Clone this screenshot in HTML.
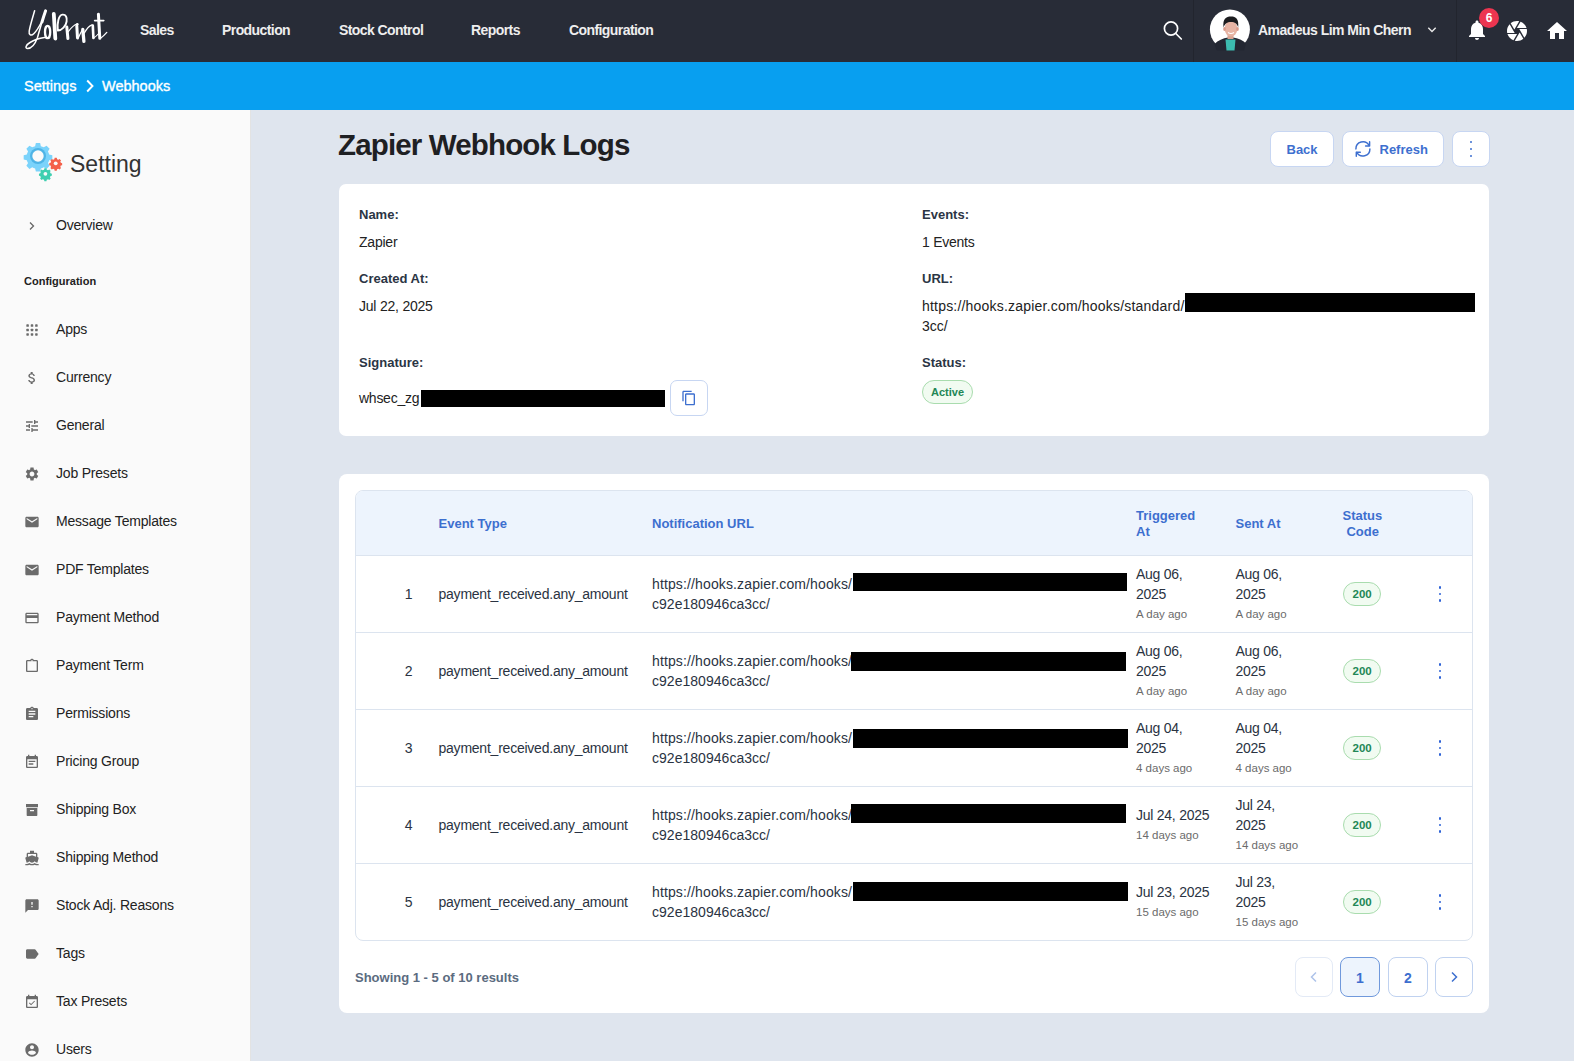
<!DOCTYPE html>
<html><head><meta charset="utf-8">
<style>
*{box-sizing:border-box;margin:0;padding:0}
html,body{width:1574px;height:1061px;overflow:hidden;background:#dfe5ee;font-family:"Liberation Sans",sans-serif;color:#212121}
.a{position:absolute}
.t{position:absolute;white-space:nowrap;line-height:20px;font-size:13.5px}
.b{font-weight:bold}
svg{display:block}
#nav{left:0;top:0;width:1574px;height:62px;background:#282c37}
#nav .n{color:#eeeeee;font-weight:bold;font-size:14px;letter-spacing:-0.58px;top:20px}
#crumb{left:0;top:62px;width:1574px;height:48px;background:#089ff0}
#side{left:0;top:110px;width:251px;height:951px;background:#fafafa;border-right:1px solid #e3e3e3}
.si{position:absolute;left:24px;width:16px;height:16px;fill:#6b6b6b}
.st{position:absolute;left:56px;font-size:14px;letter-spacing:-0.2px;margin-top:-1px;line-height:20px;color:#222;white-space:nowrap}
</style></head><body>
<!-- NAV -->
<div id="nav" class="a">
  <svg class="a" style="left:20px;top:5px" width="95" height="50" viewBox="0 0 95 50" fill="none" stroke="#fff" stroke-linecap="round" stroke-linejoin="round">
    <path d="M14.6 5.8 C12.5 13 10 21 9.2 26 C8.6 30 11 31.5 14 28.5 C17 25.5 19.5 21 21.5 17" stroke-width="1.5"/>
    <path d="M25.6 5.8 C24.5 9 23.5 12 22 17" stroke-width="3"/>
    <path d="M22 17 C20.5 22 19 27 17.5 32.5 C15.5 38 12 43.5 7.5 43.5 C5 43.5 5.5 40 10 37.5 C14 35 19 33.2 24.5 32.5" stroke-width="1.5"/>
    <ellipse cx="27.6" cy="27" rx="2.6" ry="6.2" stroke-width="2.3"/>
    <path d="M33.8 9 L35.3 33.5" stroke-width="3.8"/>
    <path d="M37.8 25.5 C37 18 38.5 10 42.5 9.6 C46 9.3 47.2 12.5 46.6 16.5 C46 21 42 25.3 37.8 25.5" stroke-width="1.9"/>
    <path d="M46.8 22 L47.9 33.5" stroke-width="3"/>
    <path d="M48.3 26.6 C51 23 54 19.8 57.2 18.8" stroke-width="1.2"/>
    <circle cx="57.4" cy="19.2" r="1.2" fill="#fff" stroke="none"/>
    <path d="M56.8 20.8 L57.5 33" stroke-width="3"/>
    <path d="M58.5 32.5 C60 29 61.5 26 62.8 24.3" stroke-width="1.2"/>
    <path d="M62.8 24.5 L63.9 36.3" stroke-width="3.3"/>
    <path d="M64.3 28 C66.5 24 69 20.8 72 19.8" stroke-width="1.3"/>
    <path d="M72.8 20.6 L73.4 33" stroke-width="2.6"/>
    <path d="M73.6 33 C75.5 32 77.5 30 79.5 27.5" stroke-width="1.1"/>
    <path d="M78.4 9.2 L79.8 33.3" stroke-width="3"/>
    <path d="M74.6 15.6 L83.8 15.6" stroke-width="1.6"/>
    <path d="M80.5 33.3 C82.5 32 84.5 30 86.8 27.4" stroke-width="1.3"/>
  </svg>
  <div class="t n" style="left:140px">Sales</div>
  <div class="t n" style="left:222px">Production</div>
  <div class="t n" style="left:339px">Stock Control</div>
  <div class="t n" style="left:471px">Reports</div>
  <div class="t n" style="left:569px">Configuration</div>

  <svg class="a" style="left:1160px;top:18px" width="26" height="26" viewBox="0 0 26 26" fill="none" stroke="#fff" stroke-width="1.7" stroke-linecap="round">
    <circle cx="11" cy="10.5" r="6.6"/><path d="M15.8 15.5 L21.3 21"/>
  </svg>
  <div class="a" style="left:1193px;top:0;width:1px;height:62px;background:#22252e"></div>
  <svg class="a" style="left:1208px;top:8px" width="44" height="46" viewBox="0 0 44 46">
    <circle cx="21.9" cy="21.5" r="20" fill="#fff"/>
    <path d="M6.5 36 C10 32.5 15 30 20 29.5 L25 29.5 C30 30 35 32.5 38 35.5 C37 39 36.5 41 36 42.5 L9 42.5 C8 41 7.5 39 6.5 36Z" fill="#232732"/>
    <path d="M17.5 31.5 L27.5 31.5 L26.5 42.5 L18.5 42.5Z" fill="#3cbcb0"/>
    <rect x="19.5" y="26" width="6" height="5" fill="#d9a493"/>
    <ellipse cx="23" cy="20.5" rx="6.3" ry="8" fill="#e7b4a4"/>
    <ellipse cx="16.5" cy="21" rx="1.3" ry="2" fill="#d99a8a"/>
    <ellipse cx="29.5" cy="21" rx="1.3" ry="2" fill="#d99a8a"/>
    <path d="M15.5 19.5 C14.5 11 18 8.6 23 8.6 C28 8.6 31 11 30.2 19.5 C29 15.5 27 14 23 14 C19 14 17 15.5 15.5 19.5Z" fill="#1d1d20"/>
    <path d="M20 24.5 Q23 26.5 26 24.5" stroke="#fff" stroke-width="1.1" fill="none"/>
  </svg>
  <div class="t" style="left:1258px;top:20px;color:#eeeeee;font-weight:bold;font-size:14px;letter-spacing:-0.53px">Amadeus Lim Min Chern</div>
  <svg class="a" style="left:1426px;top:24px" width="12" height="12" viewBox="0 0 12 12" fill="none" stroke="#e8e8e8" stroke-width="1.4"><path d="M2.3 3.8 L6 7.6 L9.7 3.8"/></svg>
  <div class="a" style="left:1456px;top:0;width:1px;height:62px;background:#22252e"></div>
  <svg class="a" style="left:1465px;top:18px" width="24" height="24" viewBox="0 0 24 24" fill="#fff"><path d="M12 22c1.1 0 2-.9 2-2h-4c0 1.1.89 2 2 2zm6-6v-5c0-3.07-1.64-5.64-4.5-6.32V4c0-.83-.67-1.5-1.5-1.5s-1.5.67-1.5 1.5v.68C7.63 5.36 6 7.92 6 11v5l-2 2v1h16v-1l-2-2z"/></svg>
  <div class="a" style="left:1479px;top:8px;width:20px;height:20px;border-radius:50%;background:#ec3550;color:#fff;font-weight:bold;font-size:12px;line-height:20px;text-align:center">6</div>
  <svg class="a" style="left:1505px;top:19px" width="24" height="24" viewBox="0 0 24 24" fill="#fff"><path d="M9.4 10.5l4.77-8.26C13.47 2.09 12.75 2 12 2c-2.4 0-4.6.85-6.32 2.25l3.66 6.35.06-.1zM21.54 9c-.92-2.92-3.150-5.26-6-6.34L11.88 9h9.66zm.26 1h-7.49l.29.5 4.76 8.25C21 16.97 22 14.61 22 12c0-.69-.07-1.35-.2-2zM8.54 12l-3.9-6.75C3.01 7.03 2 9.39 2 12c0 .69.07 1.350.2 2h7.49l-1.15-2zm-6.08 3c.92 2.92 3.15 5.26 6 6.34L12.12 15H2.46zm11.27 0l-3.9 6.76c.7.15 1.42.24 2.17.24 2.4 0 4.6-.85 6.32-2.25l-3.66-6.35-.93 1.6z"/></svg>
  <svg class="a" style="left:1545px;top:18px" width="24" height="24" viewBox="0 0 24 24" fill="#fff"><path d="M10 21v-6h4v6h5v-8h3L12 4 2 13h3v8z"/></svg>
</div>

<!-- BREADCRUMB -->
<div id="crumb" class="a">
  <div class="t" style="left:24px;top:14px;color:#fff;font-size:14.5px;-webkit-text-stroke:0.35px #fff">Settings</div>
  <svg class="a" style="left:83px;top:16px" width="14" height="16" viewBox="0 0 14 16" fill="none" stroke="#fff" stroke-width="1.9"><path d="M4.2 2.5 L9.5 8 L4.2 13.5"/></svg>
  <div class="t" style="left:102px;top:14px;color:#fff;font-size:14.5px;-webkit-text-stroke:0.35px #fff">Webhooks</div>
</div>

<!-- SIDEBAR -->
<div id="side" class="a">
  <svg class="a" style="left:22px;top:30px" width="44" height="42" viewBox="0 0 44 42">
    <g transform="translate(16 16) scale(0.93)"><path fill="#7bd3fb" d="M-2.3 -14 h4.6 l0.8 3.4 a11 11 0 0 1 3.1 1.3 l3 -1.8 l3.3 3.3 l-1.8 3 a11 11 0 0 1 1.3 3.1 l3.4 0.8 v4.6 l-3.4 0.8 a11 11 0 0 1 -1.3 3.1 l1.8 3 l-3.3 3.3 l-3 -1.8 a11 11 0 0 1 -3.1 1.3 l-0.8 3.4 h-4.6 l-0.8 -3.4 a11 11 0 0 1 -3.1 -1.3 l-3 1.8 l-3.3 -3.3 l1.8 -3 a11 11 0 0 1 -1.3 -3.1 l-3.4 -0.8 v-4.6 l3.4 -0.8 a11 11 0 0 1 1.3 -3.1 l-1.8 -3 l3.3 -3.3 l3 1.8 a11 11 0 0 1 3.1 -1.3z"/>
    <circle r="8.6" fill="#4fb4e6"/><circle r="6.1" fill="#fafafa"/></g>
    <g transform="translate(33.7 23.3) scale(0.86)"><path fill="#f4604a" d="M-1.2 -6.4 h2.4 l0.4 1.6 a5 5 0 0 1 1.5 .6 l1.4 -.9 l1.7 1.7 l-.9 1.4 a5 5 0 0 1 .6 1.5 l1.6 .4 v2.4 l-1.6 .4 a5 5 0 0 1 -.6 1.5 l.9 1.4 l-1.7 1.7 l-1.4 -.9 a5 5 0 0 1 -1.5 .6 l-.4 1.6 h-2.4 l-.4 -1.6 a5 5 0 0 1 -1.5 -.6 l-1.4 .9 l-1.7 -1.7 l.9 -1.4 a5 5 0 0 1 -.6 -1.5 l-1.6 -.4 v-2.4 l1.6 -.4 a5 5 0 0 1 .6 -1.5 l-.9 -1.4 l1.7 -1.7 l1.4 .9 a5 5 0 0 1 1.5 -.6z"/><circle r="2.2" fill="#fafafa"/></g>
    <g transform="translate(23.4 33.8) scale(0.86)"><path fill="#3fcfb0" d="M-1.2 -6.4 h2.4 l0.4 1.6 a5 5 0 0 1 1.5 .6 l1.4 -.9 l1.7 1.7 l-.9 1.4 a5 5 0 0 1 .6 1.5 l1.6 .4 v2.4 l-1.6 .4 a5 5 0 0 1 -.6 1.5 l.9 1.4 l-1.7 1.7 l-1.4 -.9 a5 5 0 0 1 -1.5 .6 l-.4 1.6 h-2.4 l-.4 -1.6 a5 5 0 0 1 -1.5 -.6 l-1.4 .9 l-1.7 -1.7 l.9 -1.4 a5 5 0 0 1 -.6 -1.5 l-1.6 -.4 v-2.4 l1.6 -.4 a5 5 0 0 1 .6 -1.5 l-.9 -1.4 l1.7 -1.7 l1.4 .9 a5 5 0 0 1 1.5 -.6z"/><circle r="2.2" fill="#fafafa"/></g>
  </svg>
  <div class="t" style="left:70px;top:39px;font-size:23px;line-height:30px;color:#333">Setting</div>
  <svg class="a" style="left:26px;top:109px" width="12" height="14" viewBox="0 0 12 14" fill="none" stroke="#666" stroke-width="1.3"><path d="M4 3.5 L7.5 7 L4 10.5"/></svg>
  <div class="st" style="top:106px">Overview</div>
  <div class="t b" style="left:24px;top:163px;font-size:11px;line-height:16px;color:#222">Configuration</div>
  <svg class="si" style="top:212px" viewBox="0 0 24 24"><rect x="3.5" y="3.5" width="3.8" height="3.8" rx="0.9"/><rect x="10.1" y="3.5" width="3.8" height="3.8" rx="0.9"/><rect x="16.7" y="3.5" width="3.8" height="3.8" rx="0.9"/><rect x="3.5" y="10.1" width="3.8" height="3.8" rx="0.9"/><rect x="10.1" y="10.1" width="3.8" height="3.8" rx="0.9"/><rect x="16.7" y="10.1" width="3.8" height="3.8" rx="0.9"/><rect x="3.5" y="16.7" width="3.8" height="3.8" rx="0.9"/><rect x="10.1" y="16.7" width="3.8" height="3.8" rx="0.9"/><rect x="16.7" y="16.7" width="3.8" height="3.8" rx="0.9"/></svg>
  <div class="st" style="top:210px">Apps</div>
  <svg class="si" style="top:260px" viewBox="0 0 24 24"><path d="M11.8 10.9c-2.27-.59-3-1.2-3-2.15 0-1.09 1.01-1.85 2.7-1.85 1.78 0 2.440.85 2.5 2.1h2.21c-.07-1.72-1.12-3.3-3.21-3.81V3h-3v2.16c-1.94.42-3.5 1.68-3.5 3.61 0 2.31 1.910 3.46 4.7 4.13 2.5.6 3 1.48 3 2.41 0 .69-.49 1.79-2.7 1.79-2.06 0-2.87-.92-2.98-2.1h-2.2c.12 2.19 1.76 3.42 3.68 3.83V21h3v-2.15c1.95-.37 3.5-1.5 3.5-3.55 0-2.84-2.43-3.81-4.7-4.4z" transform="translate(12 12) scale(1) translate(-12 -12)"/></svg>
  <div class="st" style="top:258px">Currency</div>
  <svg class="si" style="top:308px" viewBox="0 0 24 24"><path d="M3 17v2h6v-2H3zM3 5v2h10V5H3zm10 16v-2h8v-2h-8v-2h-2v6h2zM7 9v2H3v2h4v2h2V9H7zm14 4v-2H11v2h10zm-6-4h2V7h4V5h-4V3h-2v6z" /></svg>
  <div class="st" style="top:306px">General</div>
  <svg class="si" style="top:356px" viewBox="0 0 24 24"><path d="M19.14 12.94c.04-.3.06-.61.06-.94 0-.32-.02-.64-.07-.94l2.03-1.58c.18-.14.23-.41.12-.61l-1.92-3.32c-.12-.22-.37-.29-.59-.22l-2.39.96c-.5-.38-1.03-.7-1.62-.94l-.36-2.54c-.04-.24-.24-.41-.48-.41h-3.84c-.24 0-.43.17-.47.41l-.36 2.54c-.59.24-1.13.57-1.62.94l-2.39-.96c-.22-.08-.47 0-.59.22L2.74 8.87c-.12.21-.08.47.12.61l2.030 1.58c-.05.3-.09.63-.09.94s.02.64.07.94l-2.03 1.58c-.18.14-.23.41-.12.61l1.92 3.32c.12.22.37.29.59.22l2.39-.96c.5.38 1.03.7 1.62.94l.36 2.54c.05.24.24.41.48.41h3.84c.24 0 .44-.17.47-.41l.36-2.54c.59-.24 1.13-.56 1.62-.94l2.39.96c.22.08.47 0 .59-.22l1.92-3.32c.12-.22.07-.47-.12-.61l-2.01-1.58zM12 15.6c-1.98 0-3.6-1.62-3.6-3.6s1.62-3.6 3.6-3.6 3.6 1.62 3.6 3.6-1.62 3.6-3.6 3.6z"/></svg>
  <div class="st" style="top:354px">Job Presets</div>
  <svg class="si" style="top:404px" viewBox="0 0 24 24"><path d="M20 4H4c-1.1 0-1.99.9-1.99 2L2 18c0 1.1.9 2 2 2h16c1.1 0 2-.9 2-2V6c0-1.1-.9-2-2-2zm0 4l-8 5-8-5V6l8 5 8-5v2z"/></svg>
  <div class="st" style="top:402px">Message Templates</div>
  <svg class="si" style="top:452px" viewBox="0 0 24 24"><path d="M20 4H4c-1.1 0-1.99.9-1.99 2L2 18c0 1.1.9 2 2 2h16c1.1 0 2-.9 2-2V6c0-1.1-.9-2-2-2zm0 4l-8 5-8-5V6l8 5 8-5v2z"/></svg>
  <div class="st" style="top:450px">PDF Templates</div>
  <svg class="si" style="top:500px" viewBox="0 0 24 24"><path d="M20 4H4c-1.11 0-1.99.89-1.99 2L2 18c0 1.11.89 2 2 2h16c1.11 0 2-.89 2-2V6c0-1.11-.89-2-2-2zm0 14H4v-6h16v6zm0-10H4V6h16v2z"/></svg>
  <div class="st" style="top:498px">Payment Method</div>
  <svg class="si" style="top:548px" viewBox="0 0 24 24"><path d="M19 3h-4.18C14.4 1.84 13.3 1 12 1c-1.3 0-2.4.84-2.82 2H5c-1.1 0-2 .9-2 2v14c0 1.1.9 2 2 2h14c1.1 0 2-.9 2-2V5c0-1.1-.9-2-2-2zm-7 0c.55 0 1 .45 1 1s-.45 1-1 1-1-.45-1-1 .45-1 1-1zm7 16H5V5h14v14z"/></svg>
  <div class="st" style="top:546px">Payment Term</div>
  <svg class="si" style="top:596px" viewBox="0 0 24 24"><path d="M19 3h-4.18C14.4 1.84 13.3 1 12 1c-1.3 0-2.4.84-2.82 2H5c-1.1 0-2 .9-2 2v14c0 1.1.9 2 2 2h14c1.1 0 2-.9 2-2V5c0-1.1-.9-2-2-2zm-7 0c.55 0 1 .45 1 1s-.45 1-1 1-1-.45-1-1 .45-1 1-1zm2 14H7v-2h7v2zm3-4H7v-2h10v2zm0-4H7V7h10v2z"/></svg>
  <div class="st" style="top:594px">Permissions</div>
  <svg class="si" style="top:644px" viewBox="0 0 24 24"><path d="M17 10H7v2h10v-2zm2-7h-1V1h-2v2H8V1H6v2H5c-1.11 0-1.99.9-1.99 2L3 19c0 1.1.89 2 2 2h14c1.1 0 2-.9 2-2V5c0-1.1-.9-2-2-2zm0 16H5V8h14v11zm-5-5H7v2h7v-2z"/></svg>
  <div class="st" style="top:642px">Pricing Group</div>
  <svg class="si" style="top:692px" viewBox="0 0 24 24"><path d="M3 3h18v5H3zM4 9h16v11a1 1 0 0 1-1 1H5a1 1 0 0 1-1-1zM9 12v2h6v-2z" fill-rule="evenodd"/></svg>
  <div class="st" style="top:690px">Shipping Box</div>
  <svg class="si" style="top:740px" viewBox="0 0 24 24"><path d="M20 21c-1.39 0-2.78-.47-4-1.32-2.44 1.71-5.56 1.71-8 0C6.78 20.53 5.39 21 4 21H2v2h2c1.38 0 2.74-.35 4-.99 2.52 1.29 5.48 1.29 8 0 1.26.65 2.62.99 4 .99h2v-2h-2zM3.95 19H4c1.6 0 3.02-.88 4-2 .98 1.12 2.4 2 4 2s3.02-.88 4-2c.98 1.12 2.4 2 4 2h.05l1.89-6.68c.08-.26.06-.54-.06-.78s-.34-.42-.6-.5L20 10.62V6c0-1.1-.9-2-2-2h-3V1H9v3H6c-1.1 0-2 .9-2 2v4.62l-1.29.42c-.26.08-.48.26-.6.5s-.15.52-.06.78L3.95 19zM6 6h12v3.970L12 8 6 9.97V6z"/></svg>
  <div class="st" style="top:738px">Shipping Method</div>
  <svg class="si" style="top:788px" viewBox="0 0 24 24"><path d="M20 2H4c-1.1 0-1.99.9-1.99 2L2 22l4-4h14c1.1 0 2-.9 2-2V4c0-1.1-.9-2-2-2zm-7 12h-2v-2h2v2zm0-4h-2V6h2v4z"/></svg>
  <div class="st" style="top:786px">Stock Adj. Reasons</div>
  <svg class="si" style="top:836px" viewBox="0 0 24 24"><path d="M17.63 5.84C17.27 5.33 16.67 5 16 5L5 5.01C3.9 5.01 3 5.9 3 7v10c0 1.1.9 1.99 2 1.99L16 19c.67 0 1.27-.33 1.63-.84L22 12l-4.37-6.16z"/></svg>
  <div class="st" style="top:834px">Tags</div>
  <svg class="si" style="top:884px" viewBox="0 0 24 24"><path d="M16.53 11.06L15.47 10l-4.88 4.88-2.12-2.12-1.06 1.06L10.59 17l5.94-5.94zM19 3h-1V1h-2v2H8V1H6v2H5c-1.11 0-1.99.9-1.99 2L3 19c0 1.1.89 2 2 2h14c1.1 0 2-.9 2-2V5c0-1.1-.9-2-2-2zm0 16H5V8h14v11z"/></svg>
  <div class="st" style="top:882px">Tax Presets</div>
  <svg class="si" style="top:932px" viewBox="0 0 24 24"><path d="M12 2C6.48 2 2 6.48 2 12s4.48 10 10 10 10-4.48 10-10S17.52 2 12 2zm0 3c1.66 0 3 1.34 3 3s-1.34 3-3 3-3-1.34-3-3 1.34-3 3-3zm0 14.2c-2.5 0-4.710-1.28-6-3.22.03-1.99 4-3.08 6-3.08 1.99 0 5.97 1.09 6 3.08-1.29 1.94-3.5 3.22-6 3.22z"/></svg>
  <div class="st" style="top:930px">Users</div>
</div>

<!-- MAIN -->
<div id="main">
<div class="t" style="left:338px;top:128px;font-size:29.5px;line-height:34px;font-weight:bold;color:#1e2023;letter-spacing:-0.85px">Zapier Webhook Logs</div>
<div style="position:absolute;background:#fff;border:1px solid #c7d6f2;border-radius:8px;left:1270px;top:131px;width:64px;height:36px"></div>
<div class="t" style="left:1286.5px;top:140px;font-size:13px;line-height:20px;font-weight:bold;color:#3d6fcf">Back</div>
<div style="position:absolute;background:#fff;border:1px solid #c7d6f2;border-radius:8px;left:1342px;top:131px;width:102px;height:36px"></div>
<svg class="a" style="left:1352px;top:138px" width="22" height="22" viewBox="0 0 22 22" fill="none" stroke="#3d6fcf" stroke-width="1.45" stroke-linecap="round" stroke-linejoin="round"><path d="M3.9 10.9 A7 7 0 0 1 17 7.4"/><path d="M17.6 3.8 L17.6 7.9 L13.6 7.9"/><path d="M17.9 10.9 A7 7 0 0 1 4.8 14.4"/><path d="M4.3 18.2 L4.3 14.2 L8.3 14.2"/></svg>
<div class="t" style="left:1379.5px;top:140px;font-size:13px;line-height:20px;font-weight:bold;color:#3d6fcf">Refresh</div>
<div style="position:absolute;background:#fff;border:1px solid #c7d6f2;border-radius:8px;left:1452px;top:131px;width:38px;height:36px"></div>
<div class="a" style="left:1469.6px;top:140.9px;width:2.6px;height:2.6px;border-radius:50%;background:#3d6fcf"></div>
<div class="a" style="left:1469.6px;top:147.7px;width:2.6px;height:2.6px;border-radius:50%;background:#3d6fcf"></div>
<div class="a" style="left:1469.6px;top:154.5px;width:2.6px;height:2.6px;border-radius:50%;background:#3d6fcf"></div>
<div class="a" style="left:339px;top:184px;width:1150px;height:252px;background:#fff;border-radius:7px"></div>
<div class="t" style="left:359px;top:205px;font-size:13px;line-height:20px;font-weight:bold;color:#2b3544">Name:</div>
<div class="t" style="left:359px;top:232px;font-size:14px;line-height:20px;color:#222;letter-spacing:-0.22px">Zapier</div>
<div class="t" style="left:359px;top:269px;font-size:13px;line-height:20px;font-weight:bold;color:#2b3544">Created At:</div>
<div class="t" style="left:359px;top:296px;font-size:14px;line-height:20px;color:#222;letter-spacing:-0.22px">Jul 22, 2025</div>
<div class="t" style="left:359px;top:353px;font-size:13px;line-height:20px;font-weight:bold;color:#2b3544">Signature:</div>
<div class="t" style="left:359px;top:388px;font-size:14px;line-height:20px;color:#222;letter-spacing:-0.26px">whsec_zg</div>
<div class="a" style="left:421px;top:390px;width:244px;height:17px;background:#000"></div>
<div class="a" style="left:670px;top:380px;width:38px;height:36px;border:1px solid #c7d6f2;border-radius:7px;background:#fff"></div>
<svg class="a" style="left:681px;top:390px" width="16" height="16" viewBox="0 0 24 24" fill="#3d6fcf"><path d="M16 1H4c-1.1 0-2 .9-2 2v14h2V3h12V1zm3 4H8c-1.1 0-2 .9-2 2v14c0 1.1.9 2 2 2h11c1.1 0 2-.9 2-2V7c0-1.1-.9-2-2-2zm0 16H8V7h11v14z"/></svg>
<div class="t" style="left:922px;top:205px;font-size:13px;line-height:20px;font-weight:bold;color:#2b3544">Events:</div>
<div class="t" style="left:922px;top:232px;font-size:14px;line-height:20px;color:#222;letter-spacing:-0.25px">1 Events</div>
<div class="t" style="left:922px;top:269px;font-size:13px;line-height:20px;font-weight:bold;color:#2b3544">URL:</div>
<div class="t" style="left:922px;top:296px;font-size:14px;line-height:20px;color:#222;letter-spacing:0.2px">https://hooks.zapier.com/hooks/standard/</div>
<div class="a" style="left:1185px;top:293px;width:290px;height:19px;background:#000"></div>
<div class="t" style="left:922px;top:316px;font-size:14px;line-height:20px;color:#222">3cc/</div>
<div class="t" style="left:922px;top:353px;font-size:13px;line-height:20px;font-weight:bold;color:#2b3544">Status:</div>
<div class="a" style="left:922px;top:380px;width:51px;height:24px;border:1px solid #a9dcae;border-radius:12px;background:#f1fbf1"></div>
<div class="t" style="left:931px;top:384px;font-size:11px;line-height:16px;font-weight:bold;color:#228756">Active</div>
<div class="a" style="left:339px;top:474px;width:1150px;height:539px;background:#fff;border-radius:8px"></div>
<div class="a" style="left:355px;top:490px;width:1118px;height:451px;border:1px solid #dce4ef;border-radius:8px;overflow:hidden"><div class="a" style="left:0;top:0;width:1116px;height:65px;background:#edf4fd;border-bottom:1px solid #dce4ef"></div>
<div class="a" style="left:0;top:141px;width:1116px;height:1px;background:#dce4ef"></div>
<div class="a" style="left:0;top:218px;width:1116px;height:1px;background:#dce4ef"></div>
<div class="a" style="left:0;top:295px;width:1116px;height:1px;background:#dce4ef"></div>
<div class="a" style="left:0;top:372px;width:1116px;height:1px;background:#dce4ef"></div>
</div>
<div class="t" style="left:438.5px;top:514px;font-size:13px;line-height:20px;font-weight:bold;color:#3d6fcf">Event Type</div>
<div class="t" style="left:652px;top:514px;font-size:13px;line-height:20px;font-weight:bold;color:#3d6fcf">Notification URL</div>
<div class="t" style="left:1136px;top:508px;font-size:13px;line-height:16px;font-weight:bold;color:#3d6fcf">Triggered</div>
<div class="t" style="left:1136px;top:524px;font-size:13px;line-height:16px;font-weight:bold;color:#3d6fcf">At</div>
<div class="t" style="left:1235.5px;top:514px;font-size:13px;line-height:20px;font-weight:bold;color:#3d6fcf">Sent At</div>
<div class="t" style="left:1342.5px;top:508px;font-size:13px;line-height:16px;font-weight:bold;color:#3d6fcf">Status</div>
<div class="t" style="left:1346.4px;top:524px;font-size:13px;line-height:16px;font-weight:bold;color:#3d6fcf">Code</div>
<div class="t" style="left:380px;width:32.5px;text-align:right;top:584px;color:#2a3342;font-size:14px">1</div>
<div class="t" style="left:438.5px;top:584px;font-size:14px;line-height:20px;color:#2a3342;letter-spacing:-0.23px">payment_received.any_amount</div>
<div class="t" style="left:652px;top:574px;font-size:14px;line-height:20px;color:#2a3342;letter-spacing:0.13px">https://hooks.zapier.com/hooks/</div>
<div class="t" style="left:652px;top:594px;font-size:14px;line-height:20px;color:#2a3342;letter-spacing:0.03px">c92e180946ca3cc/</div>
<div class="a" style="left:853px;top:573px;width:274px;height:18px;background:#000"></div>
<div class="t" style="left:1136px;top:564px;font-size:14px;line-height:20px;color:#2a3342;letter-spacing:-0.25px">Aug 06,</div>
<div class="t" style="left:1136px;top:584px;font-size:14px;line-height:20px;color:#2a3342;letter-spacing:-0.25px">2025</div>
<div class="t" style="left:1136px;top:605px;font-size:11.5px;line-height:18px;color:#6b6b6b">A day ago</div>
<div class="t" style="left:1235.5px;top:564px;font-size:14px;line-height:20px;color:#2a3342;letter-spacing:-0.25px">Aug 06,</div>
<div class="t" style="left:1235.5px;top:584px;font-size:14px;line-height:20px;color:#2a3342;letter-spacing:-0.25px">2025</div>
<div class="t" style="left:1235.5px;top:605px;font-size:11.5px;line-height:18px;color:#6b6b6b">A day ago</div>
<div class="a" style="left:1343px;top:582px;width:38px;height:24px;border:1px solid #a9dcae;border-radius:12px;background:#f1fbf1"></div>
<div class="t" style="left:1352.5px;top:586px;font-size:11.5px;line-height:16px;font-weight:bold;color:#228756">200</div>
<div class="a" style="left:1438.6px;top:586.0px;width:2.6px;height:2.6px;border-radius:50%;background:#2f63d6"></div>
<div class="a" style="left:1438.6px;top:592.6px;width:2.6px;height:2.6px;border-radius:50%;background:#2f63d6"></div>
<div class="a" style="left:1438.6px;top:599.2px;width:2.6px;height:2.6px;border-radius:50%;background:#2f63d6"></div>
<div class="t" style="left:380px;width:32.5px;text-align:right;top:661px;color:#2a3342;font-size:14px">2</div>
<div class="t" style="left:438.5px;top:661px;font-size:14px;line-height:20px;color:#2a3342;letter-spacing:-0.23px">payment_received.any_amount</div>
<div class="t" style="left:652px;top:651px;font-size:14px;line-height:20px;color:#2a3342;letter-spacing:0.13px">https://hooks.zapier.com/hooks/</div>
<div class="t" style="left:652px;top:671px;font-size:14px;line-height:20px;color:#2a3342;letter-spacing:0.03px">c92e180946ca3cc/</div>
<div class="a" style="left:851px;top:652px;width:275px;height:19px;background:#000"></div>
<div class="t" style="left:1136px;top:641px;font-size:14px;line-height:20px;color:#2a3342;letter-spacing:-0.25px">Aug 06,</div>
<div class="t" style="left:1136px;top:661px;font-size:14px;line-height:20px;color:#2a3342;letter-spacing:-0.25px">2025</div>
<div class="t" style="left:1136px;top:682px;font-size:11.5px;line-height:18px;color:#6b6b6b">A day ago</div>
<div class="t" style="left:1235.5px;top:641px;font-size:14px;line-height:20px;color:#2a3342;letter-spacing:-0.25px">Aug 06,</div>
<div class="t" style="left:1235.5px;top:661px;font-size:14px;line-height:20px;color:#2a3342;letter-spacing:-0.25px">2025</div>
<div class="t" style="left:1235.5px;top:682px;font-size:11.5px;line-height:18px;color:#6b6b6b">A day ago</div>
<div class="a" style="left:1343px;top:659px;width:38px;height:24px;border:1px solid #a9dcae;border-radius:12px;background:#f1fbf1"></div>
<div class="t" style="left:1352.5px;top:663px;font-size:11.5px;line-height:16px;font-weight:bold;color:#228756">200</div>
<div class="a" style="left:1438.6px;top:663.0px;width:2.6px;height:2.6px;border-radius:50%;background:#2f63d6"></div>
<div class="a" style="left:1438.6px;top:669.6px;width:2.6px;height:2.6px;border-radius:50%;background:#2f63d6"></div>
<div class="a" style="left:1438.6px;top:676.2px;width:2.6px;height:2.6px;border-radius:50%;background:#2f63d6"></div>
<div class="t" style="left:380px;width:32.5px;text-align:right;top:738px;color:#2a3342;font-size:14px">3</div>
<div class="t" style="left:438.5px;top:738px;font-size:14px;line-height:20px;color:#2a3342;letter-spacing:-0.23px">payment_received.any_amount</div>
<div class="t" style="left:652px;top:728px;font-size:14px;line-height:20px;color:#2a3342;letter-spacing:0.13px">https://hooks.zapier.com/hooks/</div>
<div class="t" style="left:652px;top:748px;font-size:14px;line-height:20px;color:#2a3342;letter-spacing:0.03px">c92e180946ca3cc/</div>
<div class="a" style="left:853px;top:729px;width:275px;height:19px;background:#000"></div>
<div class="t" style="left:1136px;top:718px;font-size:14px;line-height:20px;color:#2a3342;letter-spacing:-0.25px">Aug 04,</div>
<div class="t" style="left:1136px;top:738px;font-size:14px;line-height:20px;color:#2a3342;letter-spacing:-0.25px">2025</div>
<div class="t" style="left:1136px;top:759px;font-size:11.5px;line-height:18px;color:#6b6b6b">4 days ago</div>
<div class="t" style="left:1235.5px;top:718px;font-size:14px;line-height:20px;color:#2a3342;letter-spacing:-0.25px">Aug 04,</div>
<div class="t" style="left:1235.5px;top:738px;font-size:14px;line-height:20px;color:#2a3342;letter-spacing:-0.25px">2025</div>
<div class="t" style="left:1235.5px;top:759px;font-size:11.5px;line-height:18px;color:#6b6b6b">4 days ago</div>
<div class="a" style="left:1343px;top:736px;width:38px;height:24px;border:1px solid #a9dcae;border-radius:12px;background:#f1fbf1"></div>
<div class="t" style="left:1352.5px;top:740px;font-size:11.5px;line-height:16px;font-weight:bold;color:#228756">200</div>
<div class="a" style="left:1438.6px;top:740.0px;width:2.6px;height:2.6px;border-radius:50%;background:#2f63d6"></div>
<div class="a" style="left:1438.6px;top:746.6px;width:2.6px;height:2.6px;border-radius:50%;background:#2f63d6"></div>
<div class="a" style="left:1438.6px;top:753.2px;width:2.6px;height:2.6px;border-radius:50%;background:#2f63d6"></div>
<div class="t" style="left:380px;width:32.5px;text-align:right;top:815px;color:#2a3342;font-size:14px">4</div>
<div class="t" style="left:438.5px;top:815px;font-size:14px;line-height:20px;color:#2a3342;letter-spacing:-0.23px">payment_received.any_amount</div>
<div class="t" style="left:652px;top:805px;font-size:14px;line-height:20px;color:#2a3342;letter-spacing:0.13px">https://hooks.zapier.com/hooks/</div>
<div class="t" style="left:652px;top:825px;font-size:14px;line-height:20px;color:#2a3342;letter-spacing:0.03px">c92e180946ca3cc/</div>
<div class="a" style="left:851px;top:804px;width:275px;height:19px;background:#000"></div>
<div class="t" style="left:1136px;top:805px;font-size:14px;line-height:20px;color:#2a3342;letter-spacing:-0.25px">Jul 24, 2025</div>
<div class="t" style="left:1136px;top:826px;font-size:11.5px;line-height:18px;color:#6b6b6b">14 days ago</div>
<div class="t" style="left:1235.5px;top:795px;font-size:14px;line-height:20px;color:#2a3342;letter-spacing:-0.25px">Jul 24,</div>
<div class="t" style="left:1235.5px;top:815px;font-size:14px;line-height:20px;color:#2a3342;letter-spacing:-0.25px">2025</div>
<div class="t" style="left:1235.5px;top:836px;font-size:11.5px;line-height:18px;color:#6b6b6b">14 days ago</div>
<div class="a" style="left:1343px;top:813px;width:38px;height:24px;border:1px solid #a9dcae;border-radius:12px;background:#f1fbf1"></div>
<div class="t" style="left:1352.5px;top:817px;font-size:11.5px;line-height:16px;font-weight:bold;color:#228756">200</div>
<div class="a" style="left:1438.6px;top:817.0px;width:2.6px;height:2.6px;border-radius:50%;background:#2f63d6"></div>
<div class="a" style="left:1438.6px;top:823.6px;width:2.6px;height:2.6px;border-radius:50%;background:#2f63d6"></div>
<div class="a" style="left:1438.6px;top:830.2px;width:2.6px;height:2.6px;border-radius:50%;background:#2f63d6"></div>
<div class="t" style="left:380px;width:32.5px;text-align:right;top:892px;color:#2a3342;font-size:14px">5</div>
<div class="t" style="left:438.5px;top:892px;font-size:14px;line-height:20px;color:#2a3342;letter-spacing:-0.23px">payment_received.any_amount</div>
<div class="t" style="left:652px;top:882px;font-size:14px;line-height:20px;color:#2a3342;letter-spacing:0.13px">https://hooks.zapier.com/hooks/</div>
<div class="t" style="left:652px;top:902px;font-size:14px;line-height:20px;color:#2a3342;letter-spacing:0.03px">c92e180946ca3cc/</div>
<div class="a" style="left:853px;top:882px;width:275px;height:19px;background:#000"></div>
<div class="t" style="left:1136px;top:882px;font-size:14px;line-height:20px;color:#2a3342;letter-spacing:-0.25px">Jul 23, 2025</div>
<div class="t" style="left:1136px;top:903px;font-size:11.5px;line-height:18px;color:#6b6b6b">15 days ago</div>
<div class="t" style="left:1235.5px;top:872px;font-size:14px;line-height:20px;color:#2a3342;letter-spacing:-0.25px">Jul 23,</div>
<div class="t" style="left:1235.5px;top:892px;font-size:14px;line-height:20px;color:#2a3342;letter-spacing:-0.25px">2025</div>
<div class="t" style="left:1235.5px;top:913px;font-size:11.5px;line-height:18px;color:#6b6b6b">15 days ago</div>
<div class="a" style="left:1343px;top:890px;width:38px;height:24px;border:1px solid #a9dcae;border-radius:12px;background:#f1fbf1"></div>
<div class="t" style="left:1352.5px;top:894px;font-size:11.5px;line-height:16px;font-weight:bold;color:#228756">200</div>
<div class="a" style="left:1438.6px;top:894.0px;width:2.6px;height:2.6px;border-radius:50%;background:#2f63d6"></div>
<div class="a" style="left:1438.6px;top:900.6px;width:2.6px;height:2.6px;border-radius:50%;background:#2f63d6"></div>
<div class="a" style="left:1438.6px;top:907.2px;width:2.6px;height:2.6px;border-radius:50%;background:#2f63d6"></div>
<div class="t" style="left:355px;top:968px;font-size:13px;line-height:20px;font-weight:bold;color:#5b6b80">Showing 1 - 5 of 10 results</div>
<div style="position:absolute;top:957px;height:40px;border-radius:8px;background:#fff;left:1295px;width:38px;border:1px solid #e3eaf6"></div>
<svg class="a" style="left:1306px;top:969px" width="16" height="16" viewBox="0 0 16 16" fill="none" stroke="#aec3ea" stroke-width="1.5"><path d="M10 3.5 L5.5 8 L10 12.5"/></svg>
<div style="position:absolute;top:957px;height:40px;border-radius:8px;background:#fff;left:1340px;width:40px;border:1px solid #7099dc;background:#edf4fd"></div>
<div class="t" style="left:1355px;top:968px;font-size:14px;line-height:20px;font-weight:bold;color:#3d6fcf;width:10px;text-align:center">1</div>
<div style="position:absolute;top:957px;height:40px;border-radius:8px;background:#fff;left:1388px;width:40px;border:1px solid #c0d2f0"></div>
<div class="t" style="left:1403px;top:968px;font-size:14px;line-height:20px;font-weight:bold;color:#3d6fcf;width:10px;text-align:center">2</div>
<div style="position:absolute;top:957px;height:40px;border-radius:8px;background:#fff;left:1435px;width:38px;border:1px solid #c0d2f0"></div>
<svg class="a" style="left:1446px;top:969px" width="16" height="16" viewBox="0 0 16 16" fill="none" stroke="#3d6fcf" stroke-width="1.5"><path d="M6 3.5 L10.5 8 L6 12.5"/></svg>
</div>
</body></html>
